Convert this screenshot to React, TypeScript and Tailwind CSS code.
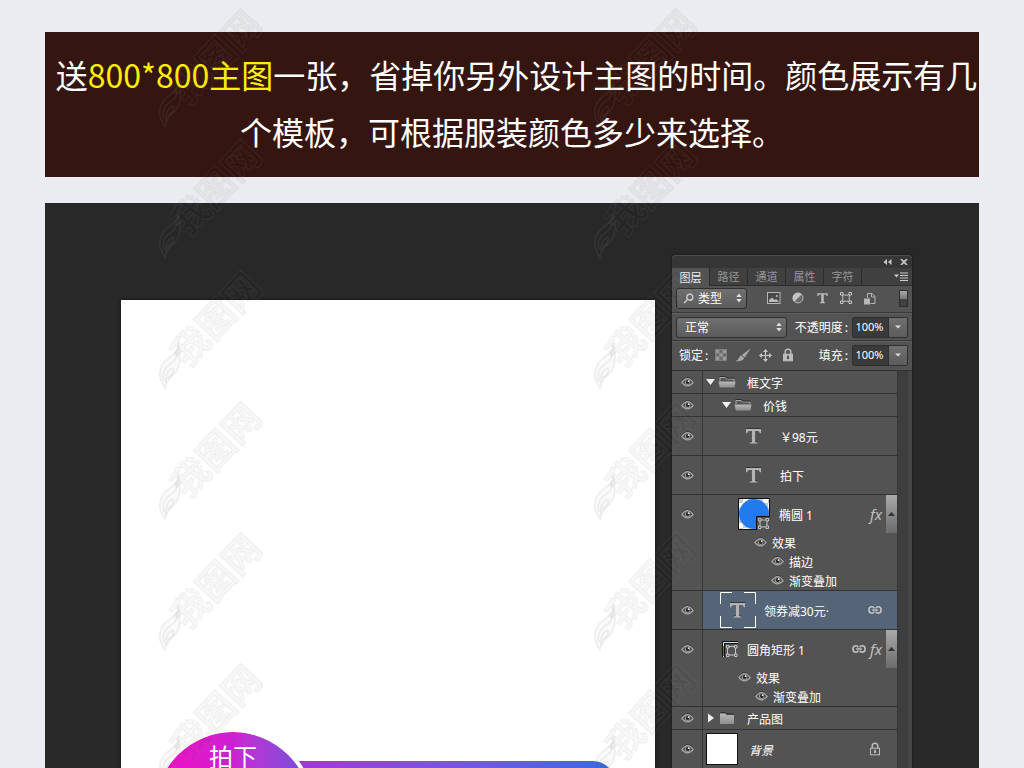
import { useState } from "react"
import type { ReactNode } from "react"

type Effect = { name: string; depth: number }

type Layer = {
  id: string
  name: string
  kind: "open" | "closed" | "text" | "ellipse" | "rect" | "background"
  pad: string
  linked?: boolean
  effects?: Effect[]
}

const TABS = ["图层", "路径", "通道", "属性", "字符"]

const LAYERS: Layer[] = [
  { id: "frame", name: "框文字", kind: "open", pad: "pl-[3px]" },
  { id: "price", name: "价钱", kind: "open", pad: "pl-[19px]" },
  { id: "yuan", name: "￥98元", kind: "text", pad: "pl-[33px]" },
  { id: "buy", name: "拍下", kind: "text", pad: "pl-[33px]" },
  {
    id: "ellipse",
    name: "椭圆 1",
    kind: "ellipse",
    pad: "pl-[35px]",
    effects: [
      { name: "效果", depth: 0 },
      { name: "描边", depth: 1 },
      { name: "渐变叠加", depth: 1 },
    ],
  },
  { id: "coupon", name: "领券减30元·", kind: "text", pad: "pl-[17px]", linked: true },
  {
    id: "rect",
    name: "圆角矩形 1",
    kind: "rect",
    pad: "pl-[19px]",
    linked: true,
    effects: [
      { name: "效果", depth: 0 },
      { name: "渐变叠加", depth: 1 },
    ],
  },
  { id: "product", name: "产品图", kind: "closed", pad: "pl-[3px]" },
  { id: "bg", name: "背景", kind: "background", pad: "pl-[3px]" },
]

function Eye() {
  return (
    <svg width="13" height="11" viewBox="0 0 13 11" fill="none" aria-hidden="true">
      <path d="M0.3 4.6Q6.5 -3.4 12.7 4.6" stroke="#303030" strokeWidth="1" />
      <path d="M0.8 5.4Q6.5 -2 12.2 5.4Q6.5 12.4 0.8 5.4Z" fill="#4a4a4a" stroke="#a8a8a8" strokeWidth="1.2" />
      <circle cx="6.5" cy="5.2" r="2.7" fill="#989898" />
      <circle cx="6.7" cy="5" r="1.9" fill="#262626" />
      <circle cx="7.6" cy="4.2" r="0.9" fill="#eee" />
    </svg>
  )
}

function Folder({ open }: { open: boolean }) {
  return (
    <svg width="18" height="14" viewBox="0 0 18 14" aria-hidden="true">
      <defs>
        <linearGradient id="folder" x1="0" y1="0" x2="0" y2="1">
          <stop offset="0" stopColor="#b8b8b8" />
          <stop offset="1" stopColor="#8e8e8e" />
        </linearGradient>
      </defs>
      {open ? (
        <>
          <path d="M2 6V2.5H7L8.5 4H16V6" fill="#555" stroke="#a9a9a9" />
          <path d="M1.5 1.5H7.5L9 3H16.5" fill="none" stroke="#2e2e2e" />
          <path d="M0.5 6.5H17.5L16.4 12.5H1.8Z" fill="url(#folder)" />
        </>
      ) : (
        <>
          <path d="M2.5 1.5H7.5L9 3H16" fill="none" stroke="#2e2e2e" />
          <path d="M2 2.5H7.2L8.5 4H16V13H2Z" fill="url(#folder)" />
        </>
      )}
    </svg>
  )
}

function ShapeIcon() {
  return (
    <svg width="12" height="12" viewBox="0 0 12 12" fill="none" stroke="#c4c4c4" aria-hidden="true">
      <path d="M2.5 2.5Q4 3.4 6 3.1Q8 3.4 9.5 2.5Q8.8 6 9.5 9.5Q6 8.8 2.5 9.5Q3.2 6 2.5 2.5Z" />
      <path d="M0.5 0.5H3V3H0.5ZM9 0.5H11.5V3H9ZM0.5 9H3V11.5H0.5ZM9 9H11.5V11.5H9Z" fill="#535353" />
    </svg>
  )
}

function LinkIcon() {
  return (
    <svg width="14" height="10" viewBox="0 0 14 10" fill="none" stroke="#c2c2c2" strokeWidth="1.6" aria-hidden="true">
      <path d="M6.2 3.4Q5.6 1.8 4 1.8Q0.9 1.8 0.9 5Q0.9 8.2 4 8.2Q5.6 8.2 6.2 6.6M7.8 3.4Q8.4 1.8 10 1.8Q13.1 1.8 13.1 5Q13.1 8.2 10 8.2Q8.4 8.2 7.8 6.6M4.2 5H9.8" />
    </svg>
  )
}

function LockIcon({ outline = false }: { outline?: boolean }) {
  return (
    <svg width="12" height="14" viewBox="0 0 12 14" fill="none" aria-hidden="true">
      <path d="M3.2 6.5V4Q3.2 1.2 6 1.2Q8.8 1.2 8.8 4V6.5" stroke="#bbb" strokeWidth="1.5" />
      <rect x="1.5" y="6.2" width="9" height="6.6" stroke="#bbb" fill={outline ? "#555" : "#bbb"} />
      <path d="M6 7.8V11" stroke={outline ? "#bbb" : "#444"} strokeWidth="1.8" />
    </svg>
  )
}

function UpDown() {
  return (
    <svg width="6" height="10" viewBox="0 0 6 10" fill="#e0e0e0" aria-hidden="true" className="pointer-events-none">
      <path d="M3 0.5L5.7 4H0.3ZM3 9.5L0.3 6H5.7Z" />
    </svg>
  )
}

function PanelSelect({ label, options, icon, className }: { label: string; options: string[]; icon?: ReactNode; className: string }) {
  return (
    <div
      className={`flex h-[21px] items-center gap-1 rounded-[3px] border border-[#2f2f2f] bg-gradient-to-b from-[#707070] to-[#5c5c5c] pr-1 ${className}`}
    >
      {icon}
      <select aria-label={label} className="min-w-0 flex-1 appearance-none bg-transparent text-[12px] leading-[18px] text-white outline-none">
        {options.map(o => (
          <option key={o}>{o}</option>
        ))}
      </select>
      <UpDown />
    </div>
  )
}

function PercentField({ id, label }: { id: string; label: string }) {
  return (
    <div className="ml-auto flex items-center">
      <label htmlFor={id} className="text-[12px] leading-[18px] text-white">
        {label}<span className="mr-1 ml-[2px]">:</span>
      </label>
      <div className="flex h-[21px] rounded-[2px] border border-[#2f2f2f]">
        <input
          id={id}
          defaultValue="100%"
          className="w-[35px] bg-[#3a3a3a] pr-[2px] text-center font-['Noto_Sans'] text-[11px] text-white outline-none"
        />
        <button aria-label={`${label}选项`} className="flex w-[19px] items-center justify-center border-l border-[#2f2f2f] bg-gradient-to-b from-[#707070] to-[#5c5c5c]">
          <svg width="6" height="4" viewBox="0 0 6 4" fill="#ddd">
            <path d="M0 0.5H6L3 3.5Z" />
          </svg>
        </button>
      </div>
    </div>
  )
}

function FilterIcons() {
  return (
    <div className="flex items-center gap-[10px] pr-[2px]">
      <button aria-label="像素图层" className="flex w-[14px] justify-center">
        <svg width="14" height="12" viewBox="0 0 14 12">
          <rect x="0.5" y="0.5" width="12.5" height="11" fill="#484848" stroke="#b5b5b5" />
          <path d="M2 10V8L5 5.5L7.5 8L9 7L11.5 9V10Z" fill="#bbb" />
          <circle cx="9.8" cy="4" r="1.1" fill="#bbb" />
        </svg>
      </button>
      <button aria-label="调整图层" className="flex w-[14px] justify-center">
        <svg width="12" height="12" viewBox="0 0 12 12">
          <circle cx="6" cy="6" r="5" fill="#6a6a6a" stroke="#b5b5b5" />
          <path d="M9.8 2.2A5.3 5.3 0 0 0 2.2 9.8Z" fill="#c4c4c4" />
        </svg>
      </button>
      <button aria-label="文字图层" className="flex w-[14px] justify-center">
        <svg width="11" height="12" viewBox="0 0 16 16">
          <path d="M0.5 1H15.5V5.2H14.2Q14 3 12 3H9.8V13.6Q9.8 14.4 12 14.7V15.5H4V14.7Q6.2 14.4 6.2 13.6V3H4Q2 3 1.8 5.2H0.5Z" fill="#bdbdbd" />
        </svg>
      </button>
      <button aria-label="形状图层" className="flex w-[14px] justify-center">
        <ShapeIcon />
      </button>
      <button aria-label="智能对象" className="flex w-[14px] justify-center">
        <svg width="12" height="13" viewBox="0 0 12 13" fill="none" stroke="#b5b5b5">
          <path d="M3.5 6V1.5H8L11 4.5V11.5H6.5" />
          <path d="M7.5 1.5V5H11" />
          <rect x="0.5" y="7" width="5" height="5" fill="#bbb" />
        </svg>
      </button>
    </div>
  )
}

function LayerThumb({ kind, selected }: { kind: Layer["kind"]; selected: boolean }) {
  if (kind === "open" || kind === "closed") {
    return (
      <span className="flex w-[41px] items-center gap-[3px]">
        <svg width="9" height="10" viewBox="0 0 9 10" fill="#f0f0f0" aria-hidden="true">
          {kind === "open" ? <path d="M0 2H9L4.5 8Z" /> : <path d="M2 0.5L8 5L2 9.5Z" />}
        </svg>
        <Folder open={kind === "open"} />
      </span>
    )
  }
  if (kind === "text") {
    return (
      <span className="flex w-11 items-center">
        <svg width="36" height="36" viewBox="0 0 36 36" fill="none" aria-hidden="true">
          {selected && (
            <path d="M0.5 12V0.5H12M24 0.5H35.5V12M35.5 24V35.5H24M12 35.5H0.5V24" stroke="#fff" />
          )}
          <g transform="translate(9.5 10)">
            <path d="M0.5 0H15.5V4H14.4Q14 2 12 2H9.6V12.6Q9.6 13.6 12 13.8V14.6H4V13.8Q6.4 13.6 6.4 12.6V2H4Q2 2 1.6 4H0.5Z" fill="#333" />
            <path d="M0.5 1H15.5V5.2H14.4Q14 3 12 3H9.6V13.6Q9.6 14.4 12 14.7V15.5H4V14.7Q6.4 14.4 6.4 13.6V3H4Q2 3 1.6 5.2H0.5Z" fill="#b4b4b4" />
          </g>
        </svg>
      </span>
    )
  }
  if (kind === "ellipse") {
    return (
      <span className="flex w-[41px] items-center">
        <svg width="32" height="32" viewBox="0 0 32 32" aria-hidden="true">
          <defs>
            <pattern id="checker" width="10" height="10" patternUnits="userSpaceOnUse">
              <rect width="10" height="10" fill="#fff" />
              <path d="M0 0H5V5H0ZM5 5H10V10H5Z" fill="#ccc" />
            </pattern>
          </defs>
          <rect x="0.5" y="0.5" width="31" height="31" fill="url(#checker)" stroke="#111" />
          <circle cx="16" cy="16" r="15" fill="#227bee" />
          <path d="M18 18H32V32H18Z" fill="#535353" />
          <path d="M18.5 32V18.5H32" fill="none" stroke="#111" />
          <g fill="none" stroke="#c4c4c4">
            <path d="M22 22H29V29H22Z" />
            <path d="M20.5 20.5H23V23H20.5ZM28 20.5H30.5V23H28ZM20.5 28H23V30.5H20.5ZM28 28H30.5V30.5H28Z" fill="#535353" />
          </g>
        </svg>
      </span>
    )
  }
  if (kind === "rect") {
    return (
      <span className="flex w-[25px] items-center">
        <svg width="16" height="16" viewBox="0 0 16 16" fill="none" aria-hidden="true">
          <path d="M0.5 16V0.5H16M2.5 16V2.5H16" stroke="#111" />
          <path d="M1.5 16V1.5H16" stroke="#d5def0" />
          <path d="M1.5 5V15" stroke="#227bee" />
          <g stroke="#c4c4c4">
            <path d="M5.5 5.5H13.5V14H5.5Z" />
            <path d="M4.5 4.5H7V7H4.5ZM12.5 4.5H15V7H12.5ZM4.5 13H7V15.5H4.5ZM12.5 13H15V15.5H12.5Z" fill="#535353" />
          </g>
        </svg>
      </span>
    )
  }
  return (
    <span className="flex w-[43px]">
      <span className="h-8 w-8 border border-[#111] bg-white" />
    </span>
  )
}

function LayerRow({ layer, selected, onSelect }: { layer: Layer; selected: boolean; onSelect: () => void }) {
  const folder = layer.kind === "open" || layer.kind === "closed"
  const rowHeight = folder ? "h-[22px]" : "h-[38px]"

  return (
    <li className="flex border-b border-[#333]">
      <div className="w-[31px] shrink-0 border-r border-[#383838]">
        <div className={`flex items-center justify-center ${rowHeight}`}>
          <button aria-label={`显示 ${layer.name}`}>
            <Eye />
          </button>
        </div>
      </div>
      <div className={`min-w-0 flex-1 ${selected ? "bg-[#566478]" : ""}`}>
        <div className={`flex items-center ${rowHeight} ${layer.pad}`}>
          <button onClick={onSelect} className="flex items-center text-left">
            <LayerThumb kind={layer.kind} selected={selected} />
            <span
              className={`pt-1 font-['Noto_Sans','Noto_Sans_CJK_SC',sans-serif] text-[12px] leading-[16px] whitespace-nowrap text-white ${layer.kind === "background" ? "italic" : ""}`}
            >
              {layer.name}
            </span>
          </button>
          <div className="ml-auto flex h-full items-center gap-1">
            {layer.linked && (
              <span className={layer.effects ? "" : "pr-[15px]"}>
                <LinkIcon />
              </span>
            )}
            {layer.kind === "background" && (
              <span className="pr-4">
                <LockIcon outline />
              </span>
            )}
            {layer.effects && (
              <>
                <span className="w-3 font-['Noto_Sans',sans-serif] text-[15px] leading-[16px] text-[#c0c0c0] italic">fx</span>
                <button aria-label="折叠效果" className="flex h-full w-[11px] items-center justify-center bg-gradient-to-b from-[#aaa] to-[#6c6c6c]">
                  <svg width="7" height="4" viewBox="0 0 7 4" fill="#333">
                    <path d="M3.5 0L7 4H0Z" />
                  </svg>
                </button>
              </>
            )}
          </div>
        </div>
        {layer.effects && (
          <ul className={layer.kind === "ellipse" ? "pl-[51px]" : "pl-[35px]"}>
            {layer.effects.map(e => (
              <li key={e.name} className={`flex h-[19px] items-center gap-[5px] ${e.depth ? "pl-[17px]" : ""}`}>
                <button aria-label={`显示 ${e.name}`}>
                  <Eye />
                </button>
                <span className="text-[12px] leading-[16px] text-white">{e.name}</span>
              </li>
            ))}
          </ul>
        )}
      </div>
    </li>
  )
}

function LayersPanel() {
  const [tab, setTab] = useState("图层")
  const [selected, setSelected] = useState("coupon")

  return (
    <aside className="mt-[52px] flex w-[240px] shrink-0 flex-col self-start rounded-t-[4px] bg-[#535353] shadow-[0_0_2px_#111]">
      <div className="flex h-[13px] items-center justify-end gap-2 rounded-t-[4px] border-t border-[#4c4c4c] bg-[#363636] pr-1">
        <button aria-label="折叠面板">
          <svg width="9" height="6" viewBox="0 0 9 6" fill="#c8c8c8">
            <path d="M4 0V6L0.5 3ZM8.5 0V6L5 3Z" />
          </svg>
        </button>
        <button aria-label="关闭面板">
          <svg width="8" height="6" viewBox="0 0 8 6" stroke="#d0d0d0" strokeWidth="1.6">
            <path d="M1 0L7 6M7 0L1 6" />
          </svg>
        </button>
      </div>

      <div className="flex h-[18px] bg-[#404040]">
        {TABS.map(t => (
          <button
            key={t}
            onClick={() => setTab(t)}
            className={`w-[38px] border-r border-[#2c2c2c] text-[11px] leading-[17px] ${t === tab ? "bg-[#535353] text-[#f0f0f0]" : "border-b text-[#969696]"}`}
          >
            {t}
          </button>
        ))}
        <div className="flex flex-1 items-center justify-end border-b border-[#2c2c2c] pr-1">
          <button aria-label="面板菜单">
            <svg width="14" height="9" viewBox="0 0 14 9">
              <path d="M0 2.5H5L2.5 5.5Z" fill="#ccc" />
              <path d="M6 1H14M6 3.5H14M6 6H14M6 8.5H14" stroke="#ccc" />
            </svg>
          </button>
        </div>
      </div>

      <div className="flex h-[27px] items-center justify-between border-b border-[#383838] pr-1 pb-[2px] pl-1">
        <PanelSelect
          label="过滤类型"
          options={["类型", "名称", "效果"]}
          className="w-[71px] pl-[6px]"
          icon={
            <svg width="11" height="11" viewBox="0 0 11 11" fill="none" stroke="#d8d8d8" strokeWidth="1.3" className="shrink-0">
              <circle cx="6.8" cy="4.2" r="3" />
              <path d="M4.6 6.4L1 10" />
            </svg>
          }
        />
        <FilterIcons />
        <button aria-label="图层过滤开关" className="flex h-[17px] w-[9px] flex-col border border-[#2c2c2c] bg-[#404040]">
          <span className="h-2 w-full bg-gradient-to-b from-[#aaa] to-[#777]" />
        </button>
      </div>

      <div className="flex h-[28px] items-center border-t border-b border-t-[#606060] border-b-[#383838] pr-1 pl-1">
        <PanelSelect label="混合模式" options={["正常", "溶解", "正片叠底"]} className="w-[111px] pl-2" />
        <PercentField id="opacity" label="不透明度" />
      </div>

      <div className="flex h-[30px] items-center border-t border-b border-t-[#606060] border-b-[#333] pr-1 pb-[2px] pl-[7px]">
        <span className="text-[12px] leading-[18px] text-white">
          锁定<span className="ml-[2px]">:</span>
        </span>
        <div className="flex items-center gap-2 pl-[7px]">
          <button aria-label="锁定透明像素">
            <svg width="12" height="12" viewBox="0 0 12 12">
              <rect x="0.5" y="0.5" width="11" height="11" fill="#6c6c6c" stroke="#7e7e7e" />
              <path d="M1 1H4.3V4.3H1ZM7.6 1H11V4.3H7.6ZM4.3 4.3H7.6V7.6H4.3ZM1 7.6H4.3V11H1ZM7.6 7.6H11V11H7.6Z" fill="#999" />
            </svg>
          </button>
          <button aria-label="锁定图像像素">
            <svg width="16" height="14" viewBox="0 0 16 14" fill="#a8a8a8">
              <path d="M15.8 0.3L9.8 9.4L6.8 7Z" />
              <path d="M6.3 7.6L9.2 10Q7.5 13.8 0.3 13.2Q3.5 12 3.8 10Q4.6 8 6.3 7.6Z" />
            </svg>
          </button>
          <button aria-label="锁定位置">
            <svg width="13" height="13" viewBox="0 0 13 13" fill="#c8c8c8">
              <path d="M6.5 0L9 3H7.1V5.9H10V4L13 6.5L10 9V7.1H7.1V10H9L6.5 13L4 10H5.9V7.1H3V9L0 6.5L3 4V5.9H5.9V3H4Z" />
            </svg>
          </button>
          <button aria-label="锁定全部" className="pl-[2px]">
            <LockIcon />
          </button>
        </div>
        <PercentField id="fill" label="填充" />
      </div>

      <div className="flex">
        <ul className="min-w-0 flex-1">
          {LAYERS.map(l => (
            <LayerRow key={l.id} layer={l} selected={selected === l.id} onSelect={() => setSelected(l.id)} />
          ))}
        </ul>
        <div className="w-[15px] border-r-4 border-l border-r-[#464646] border-l-[#383838] bg-[#3e3e3e]" />
      </div>
    </aside>
  )
}

function Artboard() {
  return (
    <section aria-label="画布" className="relative mt-[97px] min-w-0 flex-1 overflow-hidden bg-white shadow-[0_0_3px_#111]">
      <div className="absolute top-[461px] right-[40px] left-[120px] h-[96px] rounded-[22px] bg-gradient-to-r from-[#b022cc] to-[#2f6bdb]" />
      <div className="absolute top-[428px] left-[30px] h-[164px] w-[164px] rounded-full border-4 border-white bg-gradient-to-r from-[#f600c4] via-[#cc20d0] to-[#6a4cdc] bg-clip-padding pt-[9px] text-center text-[24px] leading-[30px] text-white">
        拍下
      </div>
    </section>
  )
}

function Watermark() {
  return (
    <svg width="110" height="131" viewBox="0 0 110 131" className="overflow-visible" aria-hidden="true">
      <g fill="none" stroke="#8c8c8c" strokeOpacity="0.11" strokeWidth="2">
        <path d="M24 79Q25 87 16 93Q4 101 6 114Q8 120 11 124Q13 115 21 109Q29 100 24 79Z" fill="#000" fillOpacity="0.02" />
        <path d="M10 117Q7 106 16 100Q24 95 23 88M12 119Q11 109 17 105Q21 103 19 108Q18 112 13 114" />
      </g>
      <text
        transform="translate(34 105) rotate(-47)"
        fontSize="37"
        fontWeight="700"
        fill="#000"
        fillOpacity="0.035"
        stroke="#8c8c8c"
        strokeOpacity="0.09"
        strokeWidth="1.5"
        paintOrder="stroke"
      >
        我图网
      </text>
    </svg>
  )
}

export default function App() {
  return (
    <div className="relative flex h-screen flex-col overflow-hidden bg-[#ebecf0] px-[45px] pt-8 font-['Noto_Sans_CJK_SC',sans-serif]">
      <p className="bg-[#351510] pt-[14px] pb-[17px] indent-[9px] text-center text-[32px] leading-[57px] text-white">
        送<span className="text-[#fff000]">800*800主图</span>一张，省掉你另外设计主图的时间。颜色展示有几个模板，可根据服装颜色多少来选择。
      </p>

      <main className="mt-[26px] flex min-h-0 flex-1 gap-[17px] bg-[#282828] pr-[67px] pl-[76px]">
        <Artboard />
        <LayersPanel />
      </main>

      {/* Watermark tiles over the whole page */}
      <div className="pointer-events-none absolute inset-0 grid auto-rows-[131px] grid-cols-[435px_435px] overflow-hidden pt-[2px] pl-[154px]">
        {Array.from({ length: 12 }, (_, i) => (
          <Watermark key={i} />
        ))}
      </div>
    </div>
  )
}
